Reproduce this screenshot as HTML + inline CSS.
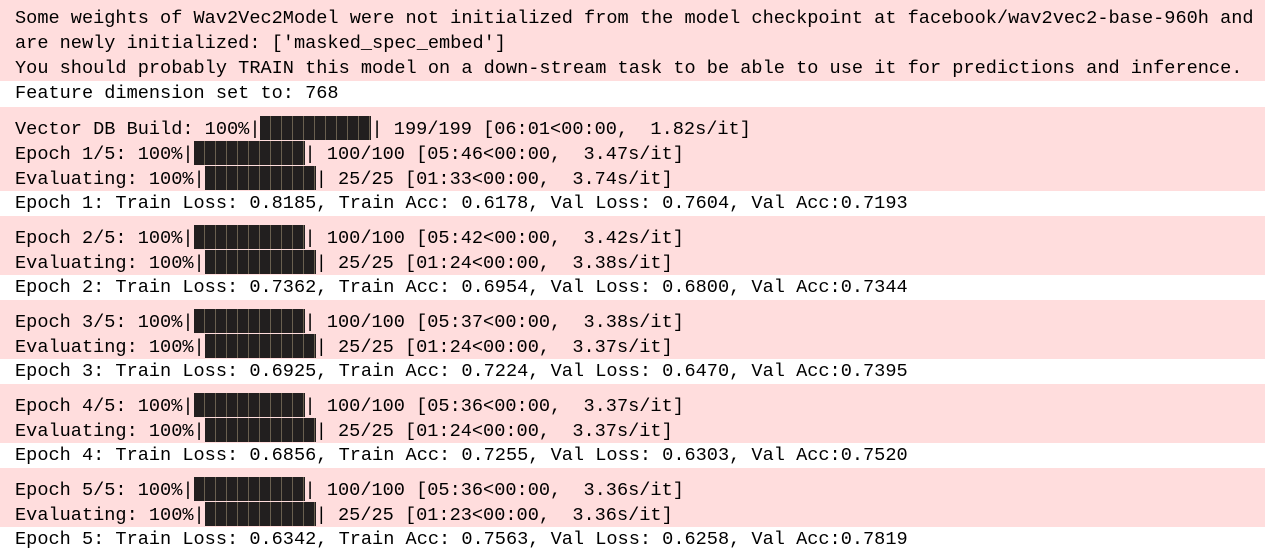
<!DOCTYPE html>
<html><head><meta charset="utf-8"><style>
body{margin:0;background:#fff;width:1268px;height:556px;overflow:hidden;font-family:"Liberation Mono","DejaVu Sans Mono",monospace;font-size:18.6px;color:#000}
.p{background:#ffdddd;width:1265px;padding-top:9px}
.w{width:1265px}
.l{height:25px;line-height:25px;padding-left:15px;white-space:pre}
.b{display:inline-block;width:111px;height:24px;vertical-align:-6px;background:#221f1f;background-image:repeating-linear-gradient(90deg,#221f1f 0 10px,#6a6050 10px 11px)}
</style></head><body>
<div class="p" style="padding-top:6px;height:75px"><div class="l">Some weights of Wav2Vec2Model were not initialized from the model checkpoint at facebook/wav2vec2-base-960h and</div><div class="l">are newly initialized: ['masked_spec_embed']</div><div class="l">You should probably TRAIN this model on a down-stream task to be able to use it for predictions and inference.</div></div>
<div class="w" style="height:26px"><div class="l">Feature dimension set to: 768</div></div>
<div class="p"><div class="l">Vector DB Build: 100%|<span class="b"></span>| 199/199 [06:01&lt;00:00,  1.82s/it]</div><div class="l">Epoch 1/5: 100%|<span class="b"></span>| 100/100 [05:46&lt;00:00,  3.47s/it]</div><div class="l">Evaluating: 100%|<span class="b"></span>| 25/25 [01:33&lt;00:00,  3.74s/it]</div></div>
<div class="w"><div class="l">Epoch 1: Train Loss: 0.8185, Train Acc: 0.6178, Val Loss: 0.7604, Val Acc:0.7193</div></div>
<div class="p"><div class="l">Epoch 2/5: 100%|<span class="b"></span>| 100/100 [05:42&lt;00:00,  3.42s/it]</div><div class="l">Evaluating: 100%|<span class="b"></span>| 25/25 [01:24&lt;00:00,  3.38s/it]</div></div>
<div class="w"><div class="l">Epoch 2: Train Loss: 0.7362, Train Acc: 0.6954, Val Loss: 0.6800, Val Acc:0.7344</div></div>
<div class="p"><div class="l">Epoch 3/5: 100%|<span class="b"></span>| 100/100 [05:37&lt;00:00,  3.38s/it]</div><div class="l">Evaluating: 100%|<span class="b"></span>| 25/25 [01:24&lt;00:00,  3.37s/it]</div></div>
<div class="w"><div class="l">Epoch 3: Train Loss: 0.6925, Train Acc: 0.7224, Val Loss: 0.6470, Val Acc:0.7395</div></div>
<div class="p"><div class="l">Epoch 4/5: 100%|<span class="b"></span>| 100/100 [05:36&lt;00:00,  3.37s/it]</div><div class="l">Evaluating: 100%|<span class="b"></span>| 25/25 [01:24&lt;00:00,  3.37s/it]</div></div>
<div class="w"><div class="l">Epoch 4: Train Loss: 0.6856, Train Acc: 0.7255, Val Loss: 0.6303, Val Acc:0.7520</div></div>
<div class="p"><div class="l">Epoch 5/5: 100%|<span class="b"></span>| 100/100 [05:36&lt;00:00,  3.36s/it]</div><div class="l">Evaluating: 100%|<span class="b"></span>| 25/25 [01:23&lt;00:00,  3.36s/it]</div></div>
<div class="w"><div class="l">Epoch 5: Train Loss: 0.6342, Train Acc: 0.7563, Val Loss: 0.6258, Val Acc:0.7819</div></div>
</body></html>
